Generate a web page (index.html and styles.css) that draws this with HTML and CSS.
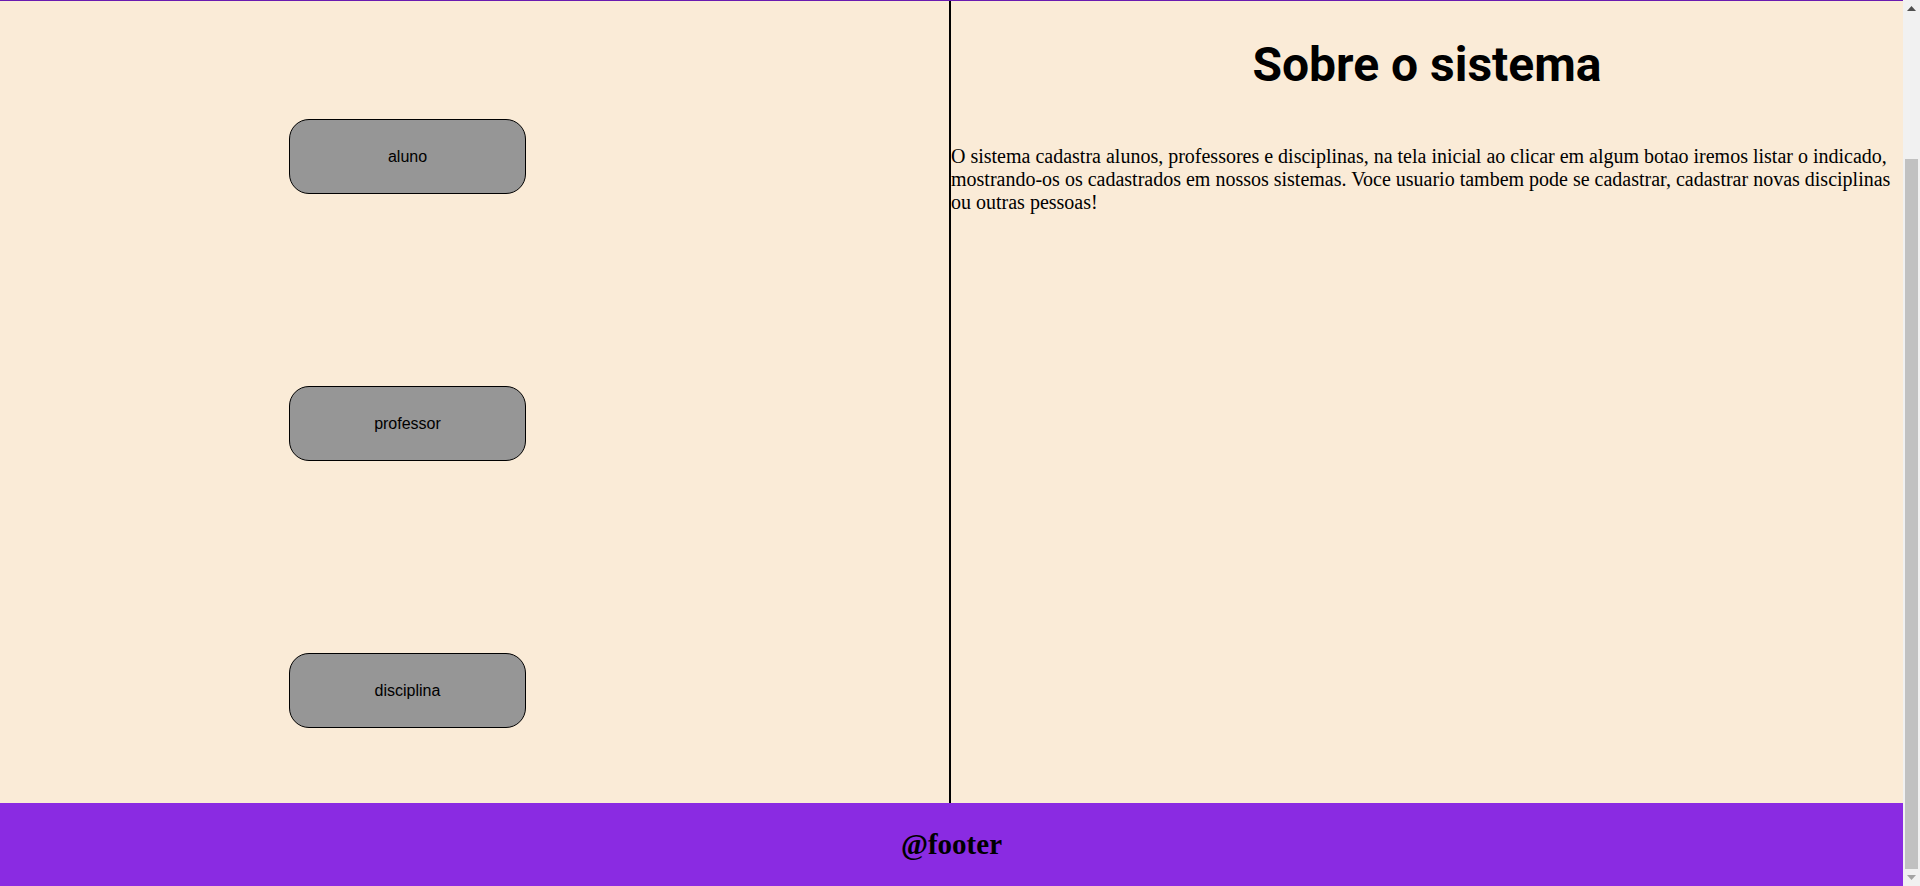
FILE: index.html
```html
<!DOCTYPE html>
<html lang="pt-BR">
<head>
<meta charset="utf-8">
<title>Sistema</title>
<link rel="stylesheet" href="styles.css">
</head>
<body>
<header class="topbar"></header>
<main class="content">
  <nav class="menu">
    <button class="menu-btn">aluno</button>
    <button class="menu-btn">professor</button>
    <button class="menu-btn">disciplina</button>
  </nav>
  <section class="about">
    <h1 class="about-title">Sobre o sistema</h1>
    <p class="about-text">O sistema cadastra alunos, professores e disciplinas, na tela inicial ao clicar em algum botao iremos listar o indicado, mostrando-os os cadastrados em nossos sistemas. Voce usuario tambem pode se cadastrar, cadastrar novas disciplinas ou outras pessoas!</p>
  </section>
</main>
<footer class="footer">
  <h2 class="footer-text">@footer</h2>
</footer>
<div class="scrollbar" aria-hidden="true">
  <div class="scroll-arrow">
    <svg width="9" height="5" viewBox="0 0 9 5"><path d="M0 5 L4.5 0 L9 5 Z" fill="#505050"/></svg>
  </div>
  <div class="scroll-track"><div class="scroll-thumb"></div></div>
  <div class="scroll-arrow">
    <svg width="9" height="5" viewBox="0 0 9 5"><path d="M0 0 L4.5 5 L9 0 Z" fill="#a3a3a3"/></svg>
  </div>
</div>
<script src="script.js"></script>
</body>
</html>
```

FILE: styles.css
```css
html, body {
  padding: 0;
}

html {
  margin: 0;
}

body {
  margin: 0 17px 0 0;
  background: #faebd7;
  font-family: "Liberation Serif", "Times New Roman", serif;
  color: #000;
}

.topbar {
  height: 173px;
  background: #8a2be2;
  border-bottom: 1px solid #6a1bb0;
}

.content {
  display: grid;
  grid-template-columns: 951px 1fr;
  height: 802px;
}

.menu {
  box-sizing: border-box;
  border-right: 2px solid #000;
  display: flex;
  flex-direction: column;
  align-items: flex-start;
  gap: 192px;
  padding: 118px 0 0 289px;
}

.menu-btn {
  box-sizing: border-box;
  width: 237px;
  height: 75px;
  background: #969696;
  border: 1px solid #000;
  border-radius: 20px;
  font-family: "Liberation Sans", Arial, sans-serif;
  font-size: 16px;
  color: #000;
  padding: 0;
  margin: 0;
}

.about {
  min-width: 0;
}

.about-title {
  font-family: Roboto, "Liberation Sans", sans-serif;
  font-weight: bold;
  font-size: 48px;
  text-align: center;
  margin: 35px 0 0 0;
  line-height: normal;
}

.about-text {
  font-size: 20px;
  margin: 52px 0 0 0;
  line-height: normal;
}

.footer {
  height: 83px;
  background: #8a2be2;
  display: flex;
  align-items: center;
  justify-content: center;
}

.footer-text {
  margin: 0;
  font-size: 29px;
  font-weight: bold;
}

/* window scrollbar, as the browser draws it over the right edge */
.scrollbar {
  position: fixed;
  top: 0;
  right: 0;
  width: 17px;
  height: 100vh;
  background: #f1f1f1;
  display: flex;
  flex-direction: column;
}

.scroll-arrow {
  height: 17px;
  display: flex;
  align-items: center;
  justify-content: center;
  flex: none;
}

.scroll-track {
  flex: 1;
  display: flex;
  flex-direction: column;
  padding: 142px 2px 0 2px;
}

.scroll-thumb {
  flex: 1;
  background: #c1c1c1;
}
```

FILE: script.js
```js
window.scrollTo(0, document.documentElement.scrollHeight);
```
